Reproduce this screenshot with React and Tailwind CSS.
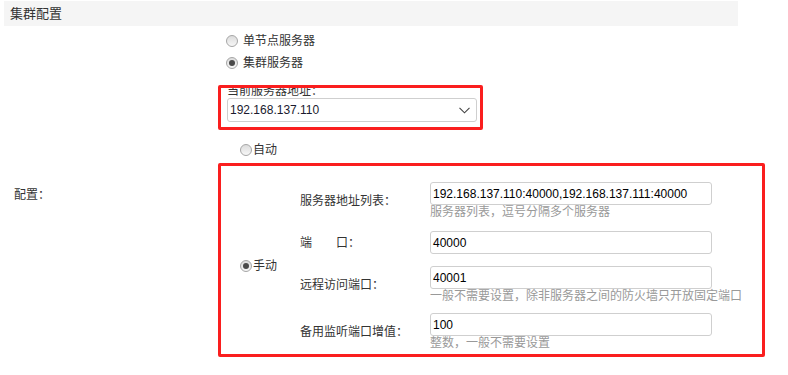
import React from 'react';

const font = { fontFamily: '"Liberation Sans", "Noto Sans CJK SC", sans-serif' };

const Radio = ({ checked }) => (
    <span className="relative inline-flex items-center justify-center w-[12px] h-[12px] rounded-full border border-[#a6a6a6] bg-gradient-to-b from-[#dcdcdc] to-[#f7f7f7] shrink-0">
        {checked && <span className="w-[6px] h-[6px] rounded-full bg-[#4a4a4a]" />}
    </span>
);

const Field = ({ label, value, hint, rowClass }) => (
    <div className={`flex items-center ${rowClass}`}>
        <div className="w-[130px] text-[12px] leading-[14px] text-[#333]">{label}</div>
        <div className="flex flex-col">
            <div className="w-[282px] h-[23px] border border-[#cfcfcf] rounded-[3px] flex items-center pl-[2px] text-[12px] text-black">
                {value}
            </div>
            {hint && <div className="text-[12px] leading-[14px] text-[#999] whitespace-nowrap">{hint}</div>}
        </div>
    </div>
);

export default function App() {
    return (
        <div className="w-[788px] h-[375px] bg-white overflow-hidden" style={font}>
            <div className="mt-[1px] ml-[4px] w-[734px] h-[25px] bg-[#f5f5f5] flex items-center pl-[6px] text-[13px] text-[#333]">
                集群配置
            </div>

            <div className="flex">
                {/* left label */}
                <div className="w-[218px] shrink-0 flex items-center pt-[6px] pl-[14px] text-[12px] text-[#333]">
                    配置：
                </div>

                {/* right cell */}
                <div className="flex flex-col pt-[4px]">
                    <div className="flex flex-col pl-[8px] text-[12px] text-[#333]">
                        <label className="h-[22px] flex items-center gap-[5px]">
                            <Radio />
                            <span>单节点服务器</span>
                        </label>
                        <label className="h-[22px] flex items-center gap-[5px]">
                            <Radio checked />
                            <span>集群服务器</span>
                        </label>
                    </div>

                    {/* current server box */}
                    <div className="mt-[11px] w-[265px] border-[3px] border-[#fa1e1e] rounded-[2px] overflow-hidden pl-[6px] pr-[3px] pb-[5px]">
                        <div className="-mt-[4px] h-[14px] leading-[14px] text-[12px] text-[#333]">当前服务器地址：</div>
                        <div className="h-[24px] w-[250px] border border-[#cfcfcf] rounded-[3px] flex items-center justify-between pl-[2px] pr-[6px] text-[12px] text-[#1a1a2e]">
                            <span>192.168.137.110</span>
                            <svg width="11" height="7" viewBox="0 0 11 7" fill="none">
                                <path d="M0.5 0.8 L5.5 5.8 L10.5 0.8" stroke="#444" strokeWidth="1.1" />
                            </svg>
                        </div>
                    </div>

                    <label className="mt-[13px] pl-[22px] h-[14px] flex items-center gap-[1px] text-[12px] text-[#333]">
                        <Radio />
                        <span>自动</span>
                    </label>

                    {/* manual config box */}
                    <div className="mt-[6px] w-[547px] border-[3px] border-[#fa1e1e] rounded-[2px] flex pt-[16px] pb-[4px]">
                        <label className="w-[79px] shrink-0 pl-[19px] flex items-center gap-[1px] text-[12px] text-[#333]">
                            <Radio checked />
                            <span>手动</span>
                        </label>
                        <div className="flex flex-col">
                            <Field
                                label="服务器地址列表："
                                value="192.168.137.110:40000,192.168.137.111:40000"
                                hint="服务器列表，逗号分隔多个服务器"
                            />
                            <Field label="端　　口：" value="40000" rowClass="mt-[12px]" />
                            <Field
                                label="远程访问端口："
                                value="40001"
                                hint="一般不需要设置，除非服务器之间的防火墙只开放固定端口"
                                rowClass="mt-[12px]"
                            />
                            <Field
                                label="备用监听端口增值："
                                value="100"
                                hint="整数，一般不需要设置"
                                rowClass="mt-[10px]"
                            />
                        </div>
                    </div>
                </div>
            </div>
        </div>
    );
}
